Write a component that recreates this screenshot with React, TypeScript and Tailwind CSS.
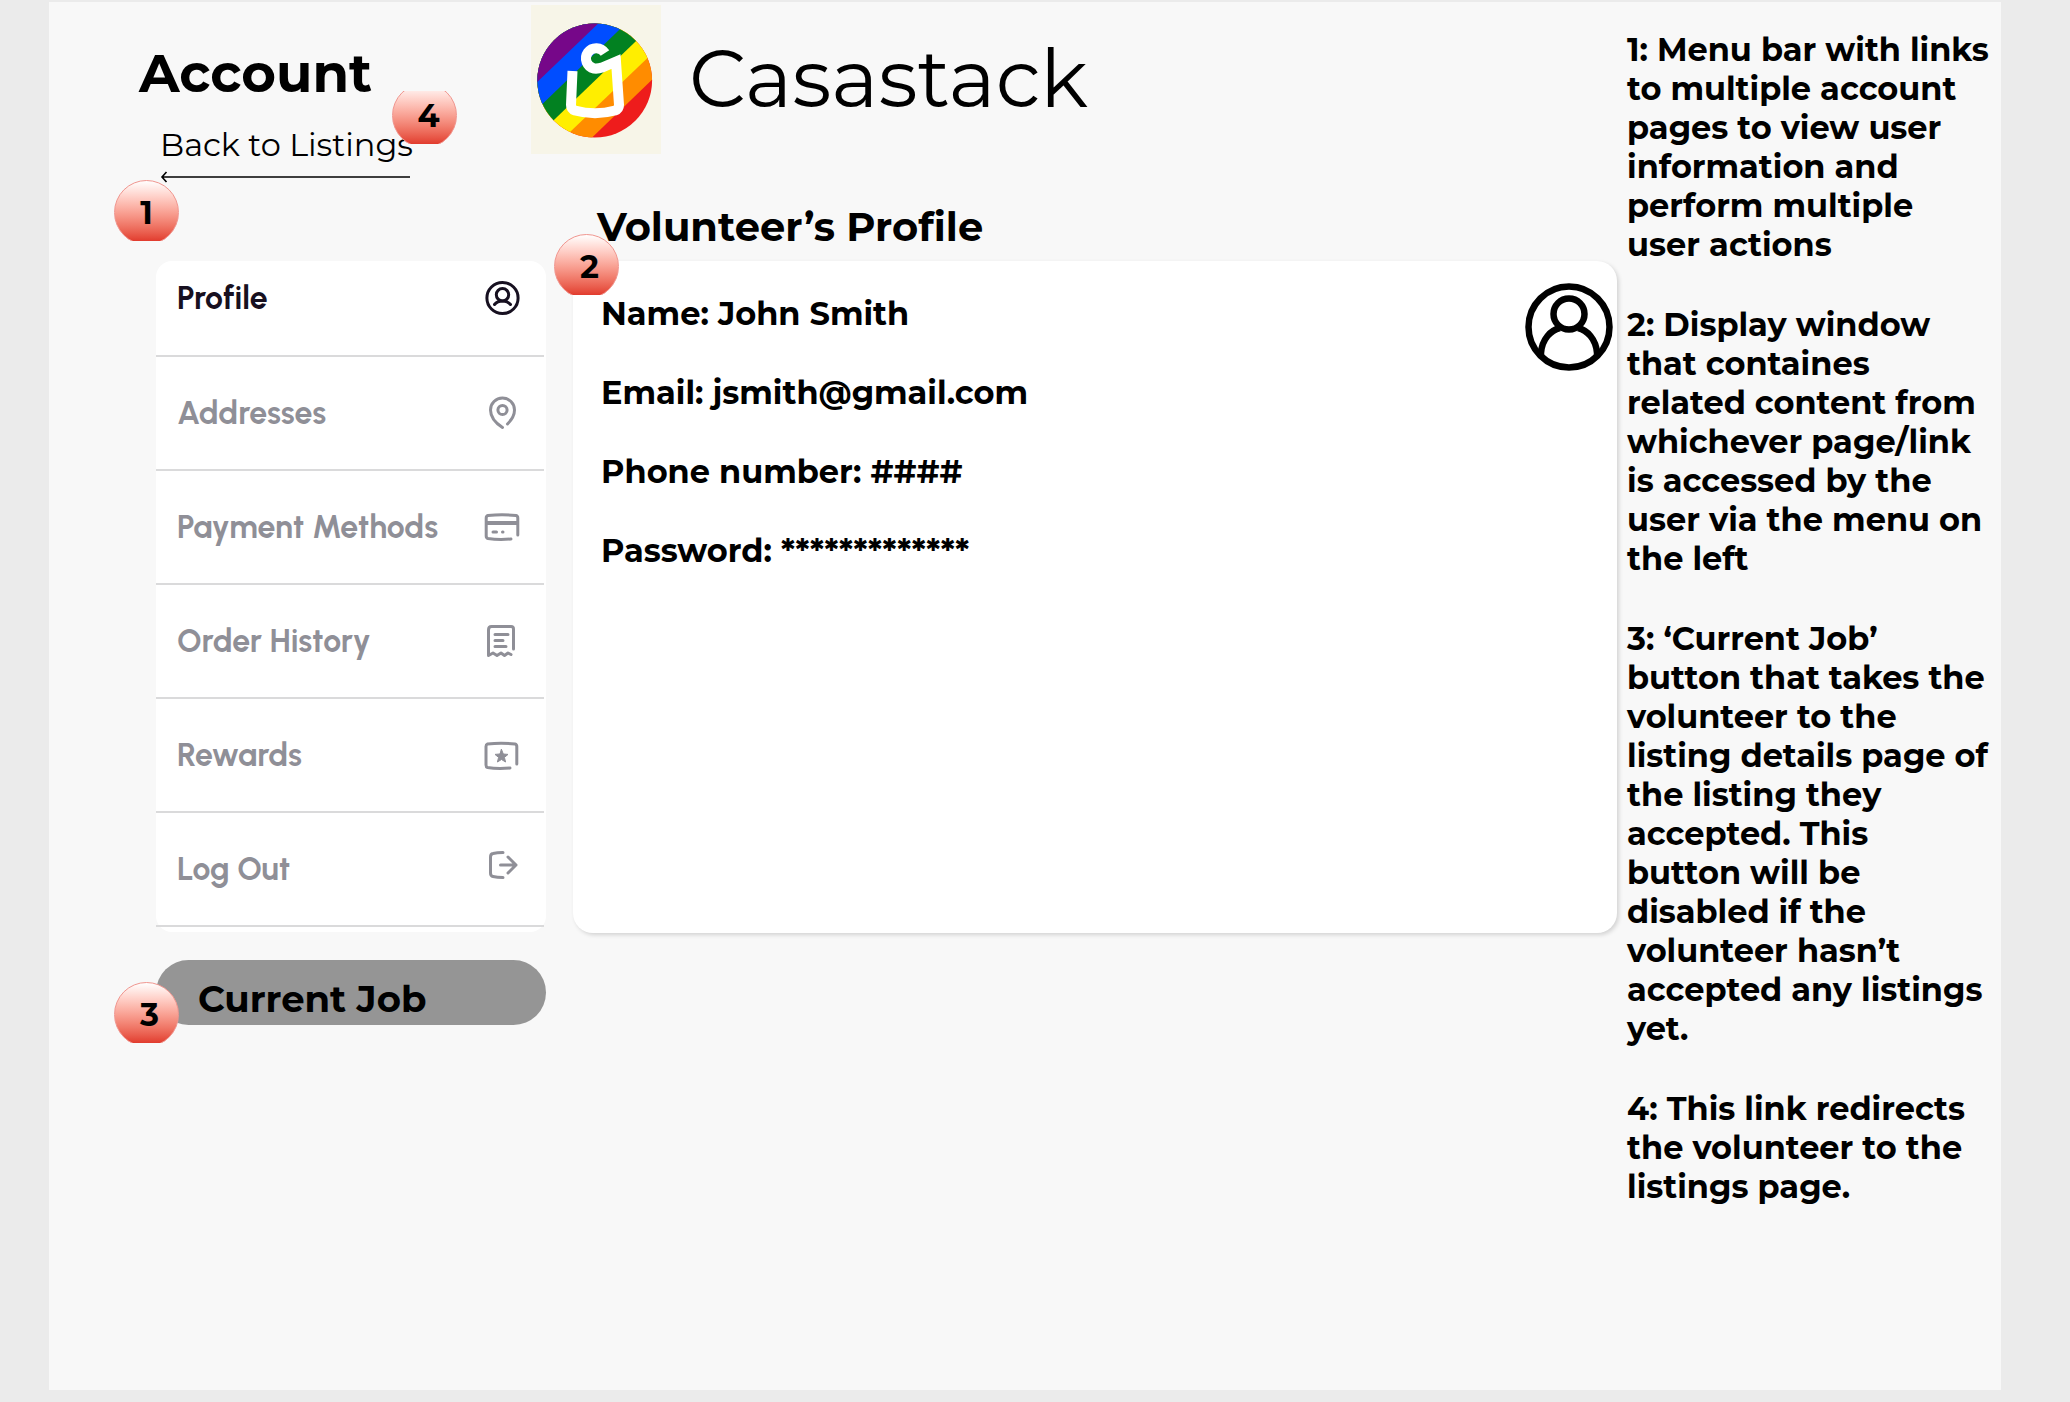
import React from 'react';

function Badge({ n, cut = false }: { n: number; cut?: boolean }) {
  return (
    <span
      className={
        cut
          ? 'flex h-[53px] w-[65px] items-end justify-center overflow-hidden'
          : 'flex h-[61px] w-[65px] items-start justify-center overflow-hidden'
      }
    >
      <span
        className={
          cut
            ? '-mb-1 flex h-[65px] w-[65px] shrink-0 items-center justify-center rounded-full border border-[#f0968f] bg-linear-to-b from-white to-[#de2a1f] pl-2 text-[32px] leading-none font-bold'
            : n === 1
              ? 'flex h-[65px] w-[65px] shrink-0 items-center justify-center rounded-full border border-[#f0968f] bg-linear-to-b from-white to-[#de2a1f] text-[32px] leading-none font-bold'
              : 'flex h-[65px] w-[65px] shrink-0 items-center justify-center rounded-full border border-[#f0968f] bg-linear-to-b from-white to-[#de2a1f] pl-1.5 text-[32px] leading-none font-bold'
        }
      >
        {n}
      </span>
    </span>
  );
}

function Logo() {
  return (
    <svg viewBox="0 0 130 149" className="h-[149px] w-[130px] shrink-0" role="img" aria-label="Casastack logo">
      <defs>
        <clipPath id="disc">
          <ellipse cx="63.700" cy="75.500" rx="57.400" ry="57" />
        </clipPath>
      </defs>
      <rect width="130" height="149" fill="#f7f5e8" />
      <g clipPath="url(#disc)">
        <rect width="130" height="149" fill="#ee1c1c" />
        <path d="M0 0H130V66L44 149H0Z" fill="#ff8c00" />
        <path d="M0 0H130V40L16 149H0Z" fill="#ffee00" />
        <path d="M0 0H130V12L0 137Z" fill="#028121" />
        <path d="M0 0H114L0 110Z" fill="#004dff" />
        <path d="M0 0H86.500L0 83Z" fill="#760789" />
      </g>
      <path
        d="M41.500 66L40 100Q40 104 44 105.500Q64 111 84 105.500Q88 104 88 100L85 56.500L71 62.500Q67 64 63 63.500A10.300 10.300 0 1 1 74 48"
        fill="none"
        stroke="#fff"
        strokeWidth="10"
      />
    </svg>
  );
}

const iconProps = {
  viewBox: '0 0 36 36',
  className: 'h-9 w-9 shrink-0',
  fill: 'none',
  stroke: 'currentColor',
  strokeWidth: 3,
  strokeLinecap: 'round' as const,
  strokeLinejoin: 'round' as const,
  'aria-hidden': true,
};

const ProfileIcon = () => (
  <svg {...iconProps}>
    <circle cx="18.500" cy="18" r="15.600" />
    <circle cx="18.500" cy="14.800" r="6.200" />
    <path d="M10.500 24.500C12.500 22 15 21 18.500 21S24.500 22 26.500 24.500" />
  </svg>
);
const PinIcon = () => (
  <svg {...iconProps}>
    <path d="M18.500 32.500C11.500 28 6.500 22 6.500 15A12 12 0 0 1 30.500 15C30.500 20.500 27.500 25 23.500 29" />
    <circle cx="18.500" cy="15" r="4.600" />
  </svg>
);
const CardIcon = () => (
  <svg {...iconProps}>
    <path d="M27 30Q14 31 4 29.500Q2.200 29 2.200 27V9Q2.200 7 4 6.500Q18 5 32 6.500Q33.800 7 33.800 9V26" />
    <path d="M3 14H33" strokeWidth="4" strokeLinecap="butt" />
    <path d="M9 23H12.500M18.500 23H19" />
  </svg>
);
const ReceiptIcon = () => (
  <svg {...iconProps}>
    <path d="M29.500 26V6Q29.500 3.500 27 3.500H7.500Q4.500 3.500 4.500 7V32.500L9 30L13 32.500L17 30L20.500 32.500L24 30L27 31.500" />
    <path d="M11 11.500H24M11 17.500H19M11 23.500H22" />
  </svg>
);
const RewardIcon = () => (
  <svg {...iconProps}>
    <path d="M26 31Q13 32 3.500 30.500Q2 30 2 28V9.500Q2 7.500 3.500 7Q17 5.500 31 7Q32.800 7.500 32.800 9.500V27" />
    <path d="M17.500 12.500L19.300 17L24 17.400L20.400 20.400L21.600 25L17.500 22.500L13.400 25L14.600 20.400L11 17.400L15.700 17Z" fill="currentColor" strokeWidth="1" />
  </svg>
);
const LogOutIcon = () => (
  <svg {...iconProps}>
    <path d="M19 1.600Q13 1.600 9 2.500Q6.500 3 6.500 6V22Q6.500 25 9 25.500Q13 26.500 19 26.500M16.500 14H32M24 6L32 14L24 22" />
  </svg>
);

const menu = [
  { label: 'Profile', Icon: ProfileIcon, active: true },
  { label: 'Addresses', Icon: PinIcon },
  { label: 'Payment Methods', Icon: CardIcon },
  { label: 'Order History', Icon: ReceiptIcon },
  { label: 'Rewards', Icon: RewardIcon },
  { label: 'Log Out', Icon: LogOutIcon },
];

const fields = ['Name: John Smith', 'Email: jsmith@gmail.com', 'Phone number: ####', 'Password: *************'];

const notes = [
  '1: Menu bar with links\nto multiple account\npages to view user\ninformation and\nperform multiple\nuser actions',
  '2: Display window\nthat containes\nrelated content from\nwhichever page/link\nis accessed by the\nuser via the menu on\nthe left',
  '3: ‘Current Job’\nbutton that takes the\nvolunteer to the\nlisting details page of\nthe listing they\naccepted. This\nbutton will be\ndisabled if the\nvolunteer hasn’t\naccepted any listings\nyet.',
  '4: This link redirects\nthe volunteer to the\nlistings page.',
];

export default function App() {
  return (
    <div className="flex min-h-screen bg-[#ebebeb] pt-0.5 pr-[69px] pb-3 pl-[49px] font-['Montserrat','Inter',sans-serif] text-black">
      <main className="flex flex-1 bg-[#f8f8f8]">
        <div className="flex min-w-0 flex-1 flex-col">
          <header className="flex h-[200px] items-start pt-[3px]">
            <div className="w-[482px] shrink-0 pt-[35px] pl-[90px]">
              <h1 className="text-[53px] leading-[66px] font-bold">Account</h1>
              <div className="relative mt-[19px] ml-[21px] w-[250px]">
                <a href="#listings" className="block text-[32px] leading-10 whitespace-nowrap">
                  Back to Listings
                  <svg viewBox="0 0 250 12" className="mt-1.5 h-3 w-[250px]" fill="none" stroke="#000" strokeWidth="1.600" aria-hidden="true">
                    <path d="M2 6H250M6.500 1L2 6L6.500 11" />
                  </svg>
                </a>
                <div className="absolute -top-[34px] left-[232px]">
                  <Badge n={4} cut />
                </div>
              </div>
            </div>
            <Logo />
            <p className="pt-[25px] pl-7 text-[80px] leading-[98px]">Casastack</p>
          </header>

          <div className="grid grid-cols-[390px_1fr] gap-x-[27px] pl-[107px]">
            <div className="relative pt-[59px]">
              <div className="absolute -top-[22px] -left-[42px]">
                <Badge n={1} />
              </div>
              <nav
                aria-label="Account"
                className="flex flex-col rounded-2xl bg-white pr-0.5 pb-[5px] font-['Urbanist','Montserrat','Inter',sans-serif] text-[32px] font-bold"
              >
                {menu.map(({ label, Icon, active }) => (
                  <a
                    key={label}
                    href="#menu"
                    className={
                      active
                        ? 'flex h-24 items-center justify-between border-b-2 border-[#dadadb] pr-6 pb-5 pl-[21px] text-[#171020]'
                        : 'flex h-[114px] items-center justify-between border-b-2 border-[#dadadb] pr-6 pl-[21px] text-[#8f8f97]'
                    }
                  >
                    {label}
                    <Icon />
                  </a>
                ))}
              </nav>
              <div className="relative mt-7">
                <button type="button" className="block h-[65px] w-full rounded-full bg-[#959595] pt-3 pl-[42px] text-left text-[37px] leading-none font-bold">
                  Current Job
                </button>
                <div className="absolute top-[22px] -left-[42px]">
                  <Badge n={3} />
                </div>
              </div>
            </div>

            <section className="relative flex flex-col">
              <h2 className="h-[59px] pl-6 text-[40px] leading-[49px] font-bold [font-variant-ligatures:none]">
                Volunteer’s Profile
              </h2>
              <div className="absolute top-8 -left-[19px]">
                <Badge n={2} />
              </div>
              <div className="flex h-[672px] justify-between rounded-[20px] rounded-tl-none bg-white pt-[22px] pr-1 pl-7 shadow-[2px_2px_4px_rgba(0,0,0,0.15)]">
                <ul className="flex flex-col gap-10 pt-[11px] text-[32px] leading-[39px] font-bold">
                  {fields.map((f) => (
                    <li key={f}>{f}</li>
                  ))}
                </ul>
                <svg viewBox="0 0 88 88" className="h-[88px] w-[88px] shrink-0" fill="none" stroke="#000" strokeWidth="6.500" role="img" aria-label="Volunteer">
                  <circle cx="44" cy="44" r="40.500" />
                  <circle cx="44" cy="31" r="15.500" />
                  <path d="M16 74V70C17 56 26 47 35 45M72 74V70C71 56 62 47 53 45" />
                </svg>
              </div>
            </section>
          </div>
        </div>

        <aside className="flex w-[384px] flex-col gap-[41px] pt-7 pl-2.5 text-[32px] leading-[39px] font-bold whitespace-pre-line">
          {notes.map((n) => (
            <p key={n}>{n}</p>
          ))}
        </aside>
      </main>
    </div>
  );
}
